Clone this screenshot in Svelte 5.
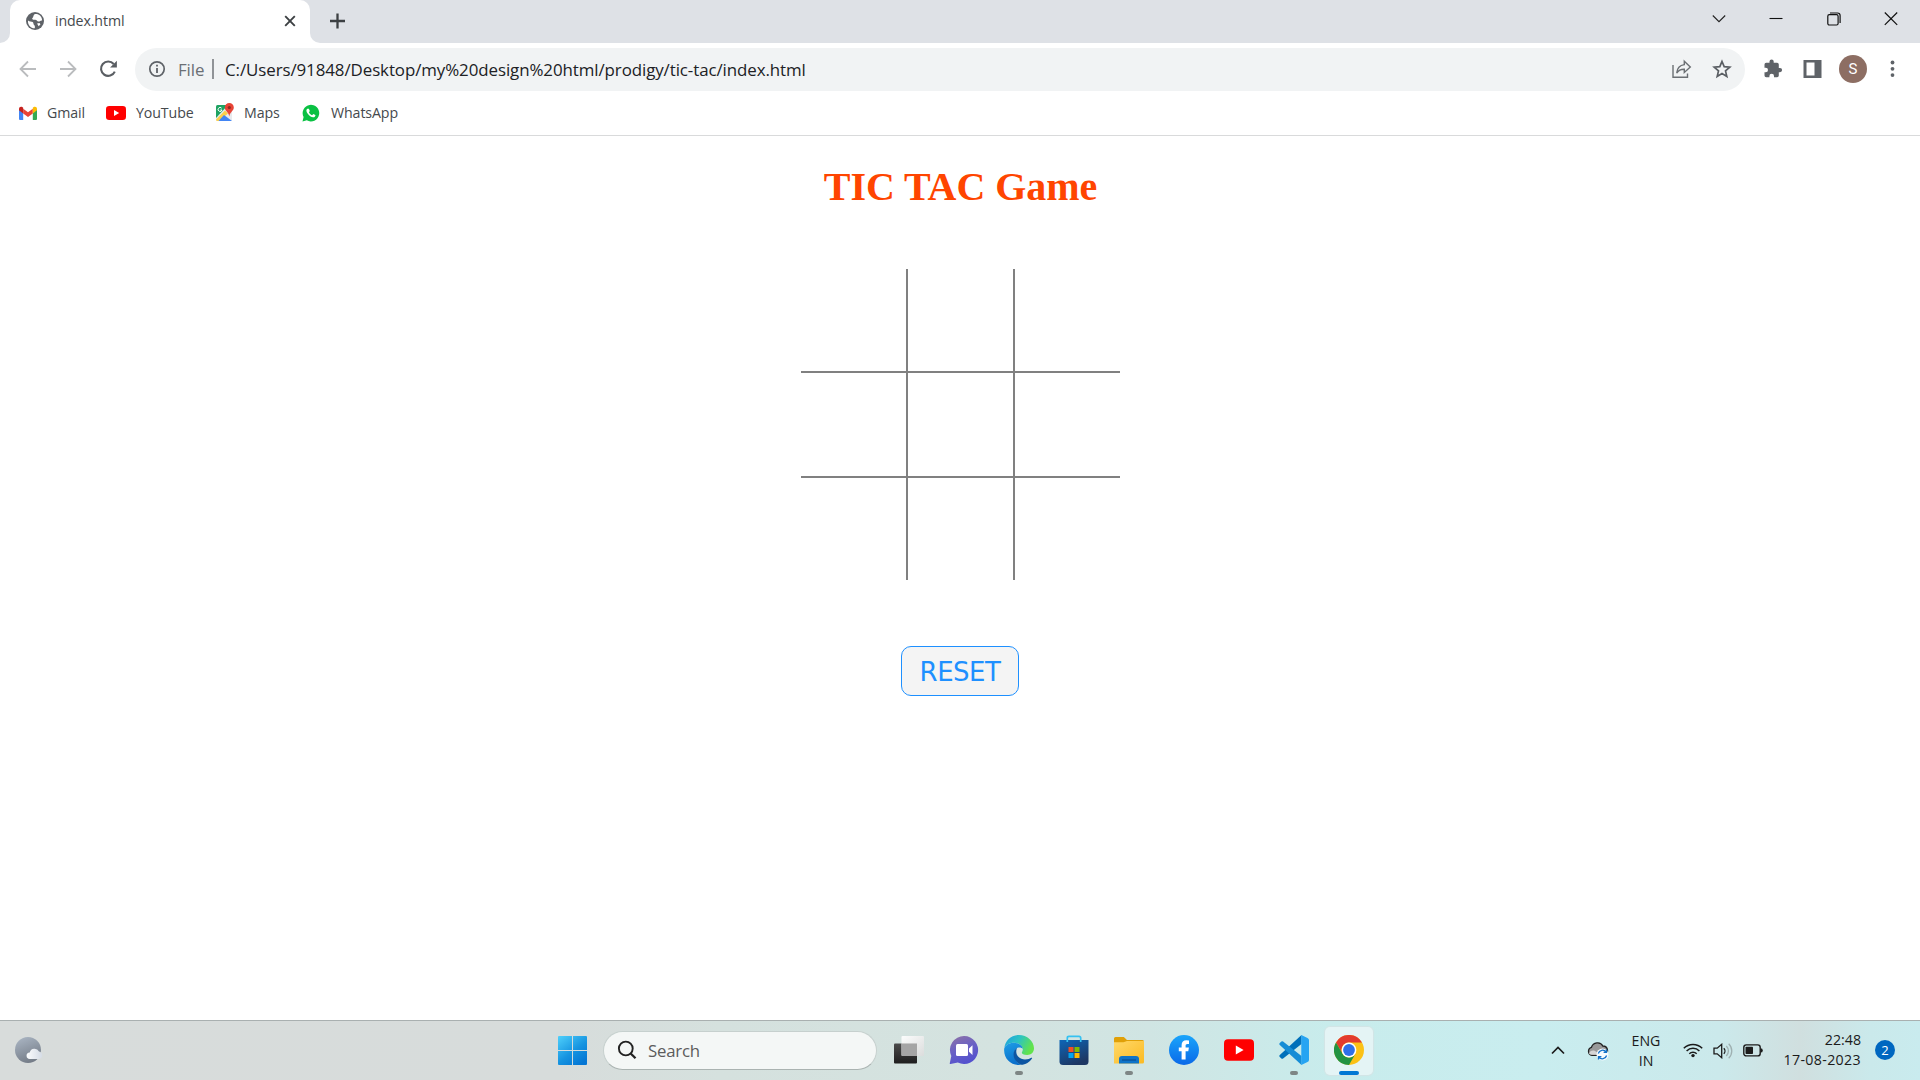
<script>
  const bookmarks = [
    { id: 'gmail', label: 'Gmail' },
    { id: 'youtube', label: 'YouTube' },
    { id: 'maps', label: 'Maps' },
    { id: 'whatsapp', label: 'WhatsApp' },
  ];

  const apps = [
    { id: 'taskview', state: '' },
    { id: 'chat', state: '' },
    { id: 'edge', state: 'open' },
    { id: 'store', state: '' },
    { id: 'explorer', state: 'open' },
    { id: 'facebook', state: '' },
    { id: 'youtube', state: '' },
    { id: 'vscode', state: 'open' },
    { id: 'chrome', state: 'active' },
  ];

  let cells = $state(Array(9).fill(''));
  let turn = $state('X');

  function play(i) {
    if (cells[i]) return;
    cells[i] = turn;
    turn = turn === 'X' ? 'O' : 'X';
  }

  function reset() {
    cells = Array(9).fill('');
    turn = 'X';
  }
</script>

{#snippet bookmarkIcon(id)}
  {#if id === 'gmail'}
    <svg class="bm-icon" width="20" height="20" viewBox="0 0 20 20">
      <path d="M1 6V15.900q0 1.100 1.100 1.100H5.200V9.400z" fill="#4285f4" />
      <path d="M19 6V15.900q0 1.100-1.100 1.100H14.800V9.400z" fill="#34a853" />
      <path d="M5.200 5.700 10 9.300l4.800-3.600v4.700L10 14.100 5.200 10.400z" fill="#ea4335" />
      <path d="M1 5.700C1 3.700 3.100 3.200 4.300 4.100l.9.700v5.600L1 7.300z" fill="#c5221f" />
      <path d="M19 5.700c0-2-2.100-2.500-3.300-1.600l-.9.700v5.600L19 7.300z" fill="#fbbc04" />
    </svg>
  {:else if id === 'youtube'}
    <svg class="bm-icon" width="20" height="20" viewBox="0 0 20 20">
      <rect y="3" width="20" height="14" rx="3.2" fill="#f00" />
      <path d="M8 7v6l5.2-3z" fill="#fff" />
    </svg>
  {:else if id === 'maps'}
    <svg class="bm-icon" width="20" height="20" viewBox="0 0 20 20">
      <rect x="2" y="2" width="16" height="16" rx="1.5" fill="#e8eaed" />
      <path d="M2 3.500Q2 2 3.500 2H14L2 15z" fill="#1ea362" />
      <path d="m2 16.500 9-9 3 3L5 18H3.500Q2 18 2 16.500z" fill="#fcd04b" />
      <path d="m4.500 18 5.500-6 8 6z" fill="#4285f4" />
      <path d="M7.600 5.200A2 2 0 1 0 8 7H6.300" fill="none" stroke="#fff" stroke-width="1" />
      <path d="M15.300 0a4.500 4.500 0 0 0-4.500 4.500c0 3.500 3.700 4 4.500 9 .8-5 4.500-5.500 4.500-9A4.500 4.500 0 0 0 15.300 0z" fill="#e84436" />
      <circle cx="15.300" cy="4.500" r="1.600" fill="#8c2b21" />
    </svg>
  {:else}
    <svg class="bm-icon" width="20" height="20" viewBox="0 0 20 20">
      <path d="M1.500 18.500 2.600 14A8.300 8.300 0 1 1 5.800 17.300z" fill="#0ac143" />
      <path d="M6.300 5.800c-1.600 1-.9 3 .3 4.800 1.500 2.200 3.500 3.700 5.600 3.700 1.500 0 2.500-1.300 2.200-2.400l-2.100-1-1.200 1.300c-1.500-.6-2.600-1.700-3.200-3l.9-1.100-.9-2.300z" fill="#fff" />
    </svg>
  {/if}
{/snippet}

{#snippet appIcon(id)}
  {#if id === 'taskview'}
    <svg width="30" height="30" viewBox="0 0 30 30">
      <defs>
        <linearGradient id="tvDark" x2="0" y2="1"><stop stop-color="#4b4b4b" /><stop offset="1" stop-color="#1e1e1e" /></linearGradient>
        <linearGradient id="tvLight" x2="1" y2="1"><stop stop-color="#fff" /><stop offset="1" stop-color="#dcdcdc" /></linearGradient>
      </defs>
      <rect y="8.500" width="23" height="20" rx="1" fill="url(#tvDark)" />
      <rect x="7.500" y="1" width="22.500" height="20" rx="1" fill="url(#tvLight)" opacity=".92" />
      <path d="M7.500 8.500H23V21H8.500q-1 0-1-1z" fill="#a5a5a5" />
    </svg>
  {:else if id === 'chat'}
    <svg width="30" height="30" viewBox="0 0 30 30">
      <defs><linearGradient id="chatG" x1=".2" x2=".6" y2="1"><stop stop-color="#8b71a8" /><stop offset=".45" stop-color="#6b62c4" /><stop offset="1" stop-color="#5250cf" /></linearGradient></defs>
      <path d="M15.200 1A14 14 0 1 1 8.800 27.500L1.500 29q-1 0-.7-1L2.300 21A14 14 0 0 1 15.200 1z" fill="url(#chatG)" />
      <rect x="7" y="9" width="12" height="12" rx="1.500" fill="#fff" />
      <path d="m20 13.500 3.500-3.200V20L20 16.700z" fill="#fff" />
    </svg>
  {:else if id === 'edge'}
    <svg width="30" height="30" viewBox="0 0 30 30">
      <defs>
        <linearGradient id="edgeTop" x1="0" x2="1" y2=".4"><stop stop-color="#1b9de2" /><stop offset=".5" stop-color="#2cc3c3" /><stop offset="1" stop-color="#62e34c" /></linearGradient>
        <linearGradient id="edgeSide" x2=".3" y2="1"><stop stop-color="#1e9ee6" /><stop offset="1" stop-color="#0a6fcb" /></linearGradient>
      </defs>
      <path d="M.3 13.500C1 5.500 7 0 15 0s15 6 15 13.300c0 4.200-3 6.700-6.800 6.700-3.600 0-5.400-1.300-5.400-2.300 0-.7 1-1.200 1-3.400 0-3.500-3.800-6.500-8.600-6.500C4.800 7.800 1 10.500.3 13.500z" fill="url(#edgeTop)" />
      <path d="M.2 13.500C1.500 9.800 5.500 7.600 9.700 7.700c5 .1 9 2.800 9.100 6.200-1-1.500-5.300-2.400-7.300.6-2.700 4.200-.8 12 5.500 15.300C7.500 31-.8 23.800.2 13.500z" fill="url(#edgeSide)" />
      <path d="M17 29.800C8.500 26 7.400 16.500 13 13c-2.500 6 1.500 11.500 8 11.500 3 0 5-.9 6.400-1.700.5-.2.900.2.600.7-2.300 3.700-6.300 6.300-11 6.300z" fill="#0c55a2" />
    </svg>
  {:else if id === 'store'}
    <svg width="30" height="30" viewBox="0 0 30 30">
      <defs><linearGradient id="storeG" x2=".5" y2="1"><stop stop-color="#0d66b8" /><stop offset="1" stop-color="#1d3763" /></linearGradient></defs>
      <path d="M.5 5h29v21.500q0 3.500-3.500 3.500H4Q.5 30 .5 26.500z" fill="url(#storeG)" />
      <path d="M8.300 7V3q0-1.700 1.700-1.700h10q1.700 0 1.700 1.700v4" fill="none" stroke="#35c1f1" stroke-width="1.700" />
      <path d="M9.500 12h5v5h-5z" fill="#f25022" /><path d="M15.500 12h5v5h-5z" fill="#7fba00" />
      <path d="M9.500 18h5v5h-5z" fill="#00a4ef" /><path d="M15.500 18h5v5h-5z" fill="#ffb900" />
    </svg>
  {:else if id === 'explorer'}
    <svg width="30" height="30" viewBox="0 0 30 30">
      <defs><linearGradient id="folderG" x2="1" y2="1"><stop stop-color="#ffd869" /><stop offset="1" stop-color="#fbba22" /></linearGradient></defs>
      <path d="M0 3.500Q0 2 1.500 2h8.300l3.200 3h15.500Q30 5 30 6.500V12H0z" fill="#e0a008" />
      <path d="M0 7.300h9.500L13 6h17v21q0 1.500-1.500 1.500H0z" fill="url(#folderG)" />
      <path d="M5 28.500V24q0-3 3-3h14q3 0 3 3v4.500z" fill="#0f74c8" />
      <path d="M8 25h14" stroke="#0a4c91" stroke-width="1.200" />
    </svg>
  {:else if id === 'facebook'}
    <svg width="30" height="30" viewBox="0 0 30 30">
      <defs><linearGradient id="fbG" x2="0" y2="1"><stop stop-color="#1aa5fb" /><stop offset="1" stop-color="#0a69e8" /></linearGradient></defs>
      <circle cx="15" cy="15" r="15" fill="url(#fbG)" />
      <path d="M12.600 24.500V16.200H9.800v-3.700h2.800v-2.200c0-3.400 1.800-5 4.800-5q1.500 0 2.600.3V9h-1.600c-1.400 0-1.800.8-1.800 1.800v1.700h3.300l-.6 3.700h-2.700v8.300z" fill="#fff" />
    </svg>
  {:else if id === 'youtube'}
    <svg width="30" height="30" viewBox="0 0 30 30">
      <rect y="4.200" width="30" height="21.500" rx="4" fill="#f00" />
      <path d="M11.800 10.500v9l7.800-4.500z" fill="#fff" />
    </svg>
  {:else if id === 'vscode'}
    <svg width="30" height="30" viewBox="0 0 30 30">
      <path d="M22.500 0 .8 20q-1 .9 0 1.900l1.600 1.500q.8.700 1.700 0L22.500 9z" fill="#0070ba" />
      <path d="M22.500 30 .8 10q-1-.9 0-1.900l1.600-1.500q.8-.7 1.700 0L22.500 21z" fill="#168dd6" />
      <path d="m22.300 0 6.200 2.900Q30 3.600 30 5v20q0 1.400-1.500 2.100L22.300 30z" fill="#26a4f2" />
    </svg>
  {:else}
    <svg width="30" height="30" viewBox="0 0 30 30">
      <circle cx="15" cy="15" r="15" fill="#fbc116" />
      <path d="M2 7.500A15 15 0 0 1 28 7.500H15A7.500 7.500 0 0 0 8.500 18.750z" fill="#e33b2e" />
      <path d="M2 7.500 8.500 18.750A7.500 7.500 0 0 0 21.500 18.750L15 30A15 15 0 0 1 2 7.500z" fill="#229342" />
      <circle cx="15" cy="15" r="7.400" fill="#fff" />
      <circle cx="15" cy="15" r="5.900" fill="#2f6fe8" />
    </svg>
  {/if}
{/snippet}

<div class="screen">
  <header class="strip">
    <div class="lead"><i></i></div>
    <div class="tab-back">
      <div class="tab">
        <svg width="20" height="20" viewBox="0 0 20 20">
          <circle cx="10" cy="10" r="9" fill="#5f6368" />
          <path d="M3 9.500c1.500 1.500 3.500.7 4.700 1.600 1.200 1 .3 2.200 1.400 3 .8.600 1 1.400.7 3.200C5.500 17.300 2.500 13.500 3 9.500zM9.500 3.200C8 4.500 8.800 6 7.300 7.200c-.8.800.8 1.800 2.500 1.600 2-.2 2 1.600 3.800 1.700 1.500 0 1.800-1.300 3.500-1C17 5 13.500 2.500 9.500 3.200zM12 12.500l2.500-.5 1 1.300-1.800 2z" fill="#fff" />
        </svg>
        <span class="tab-title">index.html</span>
        <svg width="12" height="12" viewBox="0 0 12 12"><path d="m1.200 1.200 9.600 9.600m0-9.600-9.600 9.600" stroke="#3c4043" stroke-width="1.900" /></svg>
      </div>
    </div>
    <div class="trail"><i></i></div>
    <svg class="plus" width="16" height="16" viewBox="0 0 16 16"><path d="M7.500 .5v15M0 8h15" stroke="#3c4043" stroke-width="2.300" /></svg>
    <div class="window-controls">
      <svg width="14" height="14" viewBox="0 0 14 14"><path d="m.8 3.500 6.200 6.200L13.200 3.500" fill="none" stroke="#222" stroke-width="1.100" /></svg>
      <svg width="14" height="14" viewBox="0 0 14 14"><path d="M.5 6.500h13" stroke="#111" stroke-width="1.100" /></svg>
      <svg width="14" height="14" viewBox="0 0 14 14"><rect x=".8" y="2.700" width="10.300" height="10.300" rx="1.500" fill="none" stroke="#111" stroke-width="1.200" /><path d="M3 1h7.500q2.600 0 2.600 2.600V11" fill="none" stroke="#111" stroke-width="1.200" /></svg>
      <svg width="14" height="14" viewBox="0 0 14 14"><path d="m.8.500 12.400 12.400m0-12.400L.8 12.900" stroke="#111" stroke-width="1.200" /></svg>
    </div>
  </header>

  <div class="toolbar">
    <div class="nav">
      <svg width="20" height="20" viewBox="0 0 20 20"><path d="M18 10H3M10 2.500 2.500 10l7.500 7.500" fill="none" stroke="#babcbe" stroke-width="1.800" /></svg>
      <svg width="20" height="20" viewBox="0 0 20 20"><path d="M2 10h15M10 2.500l7.500 7.500-7.500 7.500" fill="none" stroke="#babcbe" stroke-width="1.800" /></svg>
      <svg width="20" height="20" viewBox="0 0 20 20"><path d="M16.800 12.600A7.200 7.200 0 1 1 15.700 5" fill="none" stroke="#5a5e63" stroke-width="2.100" /><path d="M18.900 1.800v6.800h-6.800z" fill="#5a5e63" /></svg>
    </div>
    <div class="omnibox">
      <svg width="18" height="18" viewBox="0 0 18 18"><circle cx="9" cy="9" r="7.200" fill="none" stroke="#5f6368" stroke-width="1.700" /><path d="M9 8v5M9 4.700v1.900" stroke="#5f6368" stroke-width="1.800" /></svg>
      <span class="scheme">File</span>
      <span class="bar"></span>
      <span class="url">C:/Users/91848/Desktop/my%20design%20html/prodigy/tic-tac/index.html</span>
      <svg class="share" width="20" height="20" viewBox="0 0 20 20"><path d="M1 6v12.200h14.500V14.500" fill="none" stroke="#6b6f73" stroke-width="1.400" /><path d="M12.300 2.200 18.300 8l-6 5.500V10.200C8.500 10.100 6.500 11.300 4.700 14c.4-4.500 3.200-7.800 7.600-8.400z" fill="none" stroke="#6b6f73" stroke-width="1.400" /></svg>
      <svg width="20" height="20" viewBox="0 0 20 20"><path d="m10 2.500 2.200 5.200 5.600.5-4.300 3.700 1.300 5.500-4.800-2.900-4.800 2.900 1.300-5.500-4.300-3.700 5.600-.5z" fill="none" stroke="#5a5e63" stroke-width="1.700" /></svg>
    </div>
    <div class="actions">
      <svg width="20" height="20" viewBox="0 0 20 20"><path d="M17 9h-1.200V5.500q0-1.700-1.700-1.700h-3.400V2.500a2.100 2.100 0 0 0-4.200 0v1.300H3.200Q1.500 3.800 1.500 5.500v3.200h1.200a2.300 2.300 0 0 1 0 4.600H1.500v3.200q0 1.700 1.700 1.700h3.200v-1.200a2.300 2.300 0 0 1 4.600 0v1.200h3.100q1.700 0 1.700-1.700v-3.300H17a2.100 2.100 0 0 0 0-4.200z" fill="#5f6368" /></svg>
      <svg width="20" height="20" viewBox="0 0 20 20"><path d="M.5 1h18v18H.5zM3.500 3.500v13h8v-13z" fill="#5f6368" fill-rule="evenodd" /></svg>
      <div class="avatar">S</div>
      <svg width="20" height="20" viewBox="0 0 20 20"><circle cx="9.500" cy="3.500" r="1.900" fill="#5f6368" /><circle cx="9.500" cy="9.800" r="1.900" fill="#5f6368" /><circle cx="9.500" cy="16.100" r="1.900" fill="#5f6368" /></svg>
    </div>
  </div>

  <nav class="bookmarks">
    {#each bookmarks as b}
      <a class="bookmark {b.id}" href="#{b.id}">{@render bookmarkIcon(b.id)}<span>{b.label}</span></a>
    {/each}
  </nav>

  <main>
    <h1>TIC TAC Game</h1>
    <div class="board">
      {#each cells as c, i}
        <button class="cell" aria-label="Square {i + 1}" onclick={() => play(i)}>{c}</button>
      {/each}
    </div>
    <button class="reset" onclick={reset}>RESET</button>
  </main>

  <footer class="taskbar">
    <div class="weather">
      <svg width="28" height="28" viewBox="0 0 28 28">
        <defs>
          <linearGradient id="moonG" x1=".2" x2=".6" y2="1"><stop stop-color="#a9b4c2" /><stop offset="1" stop-color="#737b86" /></linearGradient>
          <linearGradient id="cloudG" x2="1"><stop stop-color="#fbfcfd" /><stop offset="1" stop-color="#d5dce6" /></linearGradient>
        </defs>
        <circle cx="13" cy="13" r="13" fill="url(#moonG)" />
        <path d="M15 22a3.300 3.300 0 0 1-.3-6.600A5 5 0 0 1 24 14.500a3.800 3.800 0 0 1 0 7.500z" fill="url(#cloudG)" />
      </svg>
    </div>
    <svg class="start" width="29" height="29" viewBox="0 0 29 29">
      <defs><linearGradient id="winG" gradientUnits="userSpaceOnUse" x2="22" y2="29"><stop stop-color="#4fd0fb" /><stop offset=".6" stop-color="#1593e0" /><stop offset="1" stop-color="#0476d4" /></linearGradient></defs>
      <path d="M1 0h13v14H0V1q0-1 1-1zM15 0h13q1 0 1 1v13H15zM0 15h14v14H1q-1 0-1-1zM15 15h14v13q0 1-1 1H15z" fill="url(#winG)" />
    </svg>
    <div class="search">
      <svg width="20" height="20" viewBox="0 0 20 20"><circle cx="8.800" cy="8.500" r="6.900" fill="none" stroke="#222" stroke-width="1.900" /><path d="m13.700 13.500 4.800 4.800" stroke="#222" stroke-width="2.300" /></svg>
      <span>Search</span>
    </div>
    <div class="apps">
      {#each apps as app}
        <div class="app {app.state}">
          <div class="tile">{@render appIcon(app.id)}</div>
          {#if app.state}<span class="mark"></span>{/if}
        </div>
      {/each}
    </div>
    <div class="tray">
      <svg class="up" width="14" height="10" viewBox="0 0 14 10"><path d="m1 7.500 6-6 6 6" fill="none" stroke="#1b1b1b" stroke-width="1.700" /></svg>
      <svg class="drive" width="22" height="20" viewBox="0 0 22 20">
        <path d="M5 14.300a4.100 4.100 0 0 1-.5-8C6 1.200 13.500.2 15.800 5a4.700 4.700 0 0 1 1 9.300z" fill="#999" stroke="#222" stroke-width="1.300" />
        <path d="M2 12.500c1-3 4-3.500 6-2.500L14 13.800H4.500q-1.800 0-2.500-1.300z" fill="#d5d5d5" />
        <circle cx="15.500" cy="13.500" r="6" fill="#f7fbfe" />
        <path d="M11.300 12.500a4.400 4.400 0 0 1 7.800-1.500m.5 3.500a4.400 4.400 0 0 1-7.800 1.500M19.500 8.500V11.400h-2.900M11.500 18.500v-2.900h2.900" fill="none" stroke="#1372c9" stroke-width="1.300" />
      </svg>
      <div class="lang"><span>ENG</span><span>IN</span></div>
      <div class="status">
        <svg width="20" height="16" viewBox="0 0 20 16">
          <path d="M.8 5.200a13 13 0 0 1 18.400 0M3.600 8a9 9 0 0 1 12.800 0M6.300 10.700a5.300 5.300 0 0 1 7.400 0" fill="none" stroke="#1b1b1b" stroke-width="1.500" /><circle cx="10" cy="12.600" r="1.700" fill="#1b1b1b" />
        </svg>
        <svg width="20" height="16" viewBox="0 0 20 16">
          <path d="M1 5.200h3.200L8.700 1.300v13.400l-4.500-3.900H1z" fill="none" stroke="#1b1b1b" stroke-width="1.300" /><path d="M10.800 5.200a4 4 0 0 1 0 5.600" fill="none" stroke="#1b1b1b" stroke-width="1.300" /><path d="M13.300 3a7 7 0 0 1 0 10M15.700.8a10 10 0 0 1 0 14.400" fill="none" stroke="#9fb0b1" stroke-width="1.300" />
        </svg>
        <svg width="20" height="16" viewBox="0 0 20 16">
          <rect x=".8" y="1.900" width="16.400" height="11" rx="2.500" fill="none" stroke="#1b1b1b" stroke-width="1.400" /><rect x="2.500" y="3.700" width="7.500" height="7.400" rx=".8" fill="#1b1b1b" /><path d="M17.500 5.200q2.300 0 2.300 2.200t-2.300 2.200z" fill="#1b1b1b" />
        </svg>
      </div>
      <div class="clock"><span class="time">22:48</span><span class="date">17-08-2023</span></div>
      <div class="count">2</div>
    </div>
  </footer>
</div>

<style>
  :global(body) { background: #fff; overflow: hidden; }
  .screen {
    width: 1920px; height: 1080px; display: flex; flex-direction: column; background: #fff;
    font-family: 'Open Sans', 'Noto Sans', sans-serif; font-size: 14.200px; color: #45494d;
  }
  svg { display: block; flex: none; }

  .strip { height: 43px; display: flex; background: #dee1e6; flex: none; }
  .lead, .trail { width: 10px; background: #fff; }
  .lead i, .trail i { display: block; height: 43px; background: #dee1e6; }
  .lead i { border-bottom-right-radius: 10px; }
  .trail i { border-bottom-left-radius: 10px; }
  .tab-back { width: 300px; background: #dee1e6; }
  .tab {
    height: 43px; box-sizing: border-box; padding: 0 14px 1px 15px; display: flex; align-items: center;
    background: #fff; border-radius: 10px 10px 0 0;
  }
  .tab-title { flex: 1; margin-left: 10px; line-height: 20px; letter-spacing: -.12px; }
  .plus { margin: 13px 0 0 10px; }
  .window-controls { margin: 12px 22px 0 auto; display: flex; gap: 43.300px; }

  .toolbar { height: 53px; display: flex; align-items: flex-start; padding-top: 5px; box-sizing: border-box; flex: none; }
  .nav { width: 135px; height: 43px; padding-left: 17.500px; box-sizing: border-box; display: flex; gap: 20px; align-items: center; padding-bottom: 2px; }
  .omnibox {
    width: 1610px; height: 43px; box-sizing: border-box; padding: 0 13px 1px; display: flex; align-items: center;
    background: #f1f3f4; border-radius: 22px; font-size: 16.900px;
  }
  .scheme { width: 24px; margin-left: 12px; color: #6b6f74; letter-spacing: -.1px; }
  .bar { width: 2px; height: 20px; margin-left: 10px; background: #909397; }
  .url { margin-left: 11px; color: #202124; white-space: nowrap; letter-spacing: -.08px; }
  .share { margin: 0 20px 0 auto; }
  .actions { display: flex; align-items: center; height: 42px; margin-left: 17.500px; gap: 16px; }
  .actions svg:first-child { margin-right: 4.500px; }
  .avatar {
    width: 28px; height: 28px; border-radius: 50%; background: #8d6e63; color: #fff;
    display: flex; align-items: center; justify-content: center; font: 15px Roboto, sans-serif;
  }

  .bookmarks { height: 40px; box-sizing: border-box; padding: 6px 0 0 18px; display: flex; align-items: flex-start; border-bottom: 1px solid #d9dadb; flex: none; }
  .bookmark { display: flex; align-items: center; height: 22px; color: #45494d; text-decoration: none; letter-spacing: -.1px; }
  .bookmark span { margin-left: 10px; padding-bottom: 2px; }
  .gmail { width: 88px; }
  .gmail span { margin-left: 9px; }
  .youtube { width: 108px; }
  .maps { width: 87px; }

  main { flex: 1; display: flex; flex-direction: column; align-items: center; }
  h1 { margin: 28px 0 0 1px; font: bold 40px/46px 'Liberation Serif', serif; letter-spacing: -.05px; color: #ff4500; white-space: nowrap; }
  .board { margin: 59px 0 0 1px; width: 319px; height: 311px; display: grid; grid-template-columns: 105px 105px 105px; grid-template-rows: 102px 103px 102px; gap: 2px; background: #808080; }
  .cell { border: 0; padding: 0; background: #fff; font: 48px 'Liberation Serif', serif; }
  .reset {
    margin-top: 66px; width: 118px; height: 50px; border: 1px solid #1e90ff; border-radius: 10px; padding: 1px 0 0;
    background: #f4f4f4; color: #1e90ff; font: 26px 'DejaVu Sans', sans-serif; letter-spacing: -.5px;
  }

  .taskbar {
    height: 60px; box-sizing: border-box; border-top: 1px solid #a9b0b0; display: flex; align-items: center; flex: none;
    background: linear-gradient(90deg, #d8dcdb 0, #d7dcdb 560px, #d5e1de 720px, #d4e3e0 1000px, #d0e5e3 1150px, #c8ecec 1330px, #c9edef 1540px, #cbe9eb 1720px, #d0dfdf 1800px, #cae9eb 1870px, #c9ebee 1920px);
    color: #1b1b1b;
  }
  .weather { width: 558px; padding-left: 15px; box-sizing: border-box; }
  .search {
    width: 274px; height: 39px; box-sizing: border-box; margin: 0 0 1px 16px; padding-left: 13px; border: 1px solid #c6d0ce; border-bottom-color: #aab3b1;
    border-radius: 20px; background: #f4f7f6; display: flex; align-items: center; font-size: 16.800px; color: #5c5c5c;
  }
  .search span { margin-left: 11px; letter-spacing: -.2px; }
  .apps { display: flex; margin-left: 4px; }
  .app { width: 55px; display: flex; justify-content: center; position: relative; }
  .tile { width: 48px; height: 48px; box-sizing: border-box; border-radius: 5px; display: flex; align-items: center; justify-content: center; padding-bottom: 1px; }
  .active .tile { background: #e4f4f5; box-shadow: 0 0 1px 1px #d3e5e6; }
  .mark { position: absolute; bottom: 0; width: 8px; height: 4px; border-radius: 2px; background: #7e8685; }
  .active .mark { width: 20px; background: #0078d4; }
  .tray { display: flex; align-items: center; margin-left: auto; padding-right: 25px; }
  .drive { margin-left: 22px; }
  .lang, .clock { display: flex; flex-direction: column; line-height: 20px; }
  .lang { width: 32px; align-items: center; margin-left: 21px; }
  .status { display: flex; gap: 10px; margin-left: 21px; }
  .clock { width: 78px; margin-left: 20px; padding-bottom: 2px; align-items: flex-end; white-space: nowrap; }
  .date { letter-spacing: .35px; }
  .count { width: 20px; height: 20px; border-radius: 50%; margin: 0 0 1px 14px; background: #0067c0; color: #fff; display: flex; align-items: center; justify-content: center; font-size: 13px; }
</style>
